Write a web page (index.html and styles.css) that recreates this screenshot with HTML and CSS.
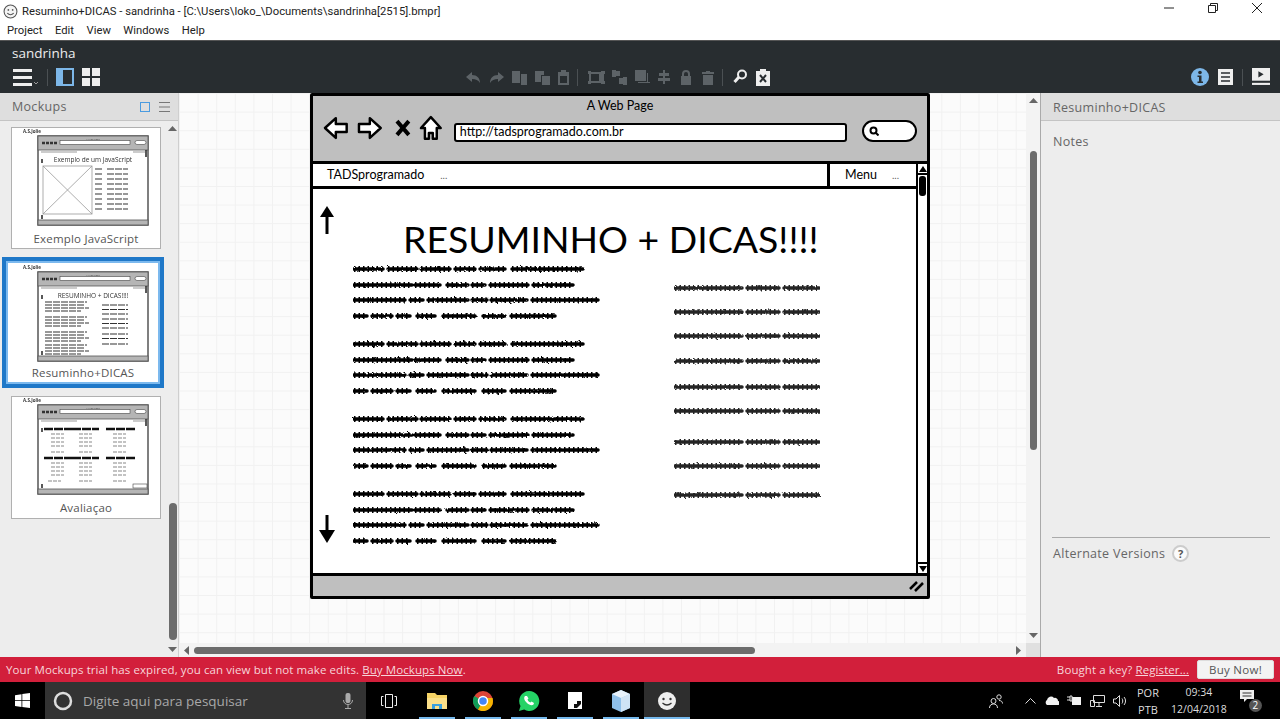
FILE: index.html
```html
<!DOCTYPE html>
<html lang="en">
<head>
  <meta charset="UTF-8">
  <meta name="viewport" content="width=device-width, initial-scale=1">
  <title>Resuminho+DICAS - sandrinha</title>
  <link rel="stylesheet" href="styles.css">
</head>
<body>

  <!-- shared drawings -->
  <svg class="defs" width="0" height="0">
    <defs>
      <filter id="rough" x="-2%" y="-2%" width="104%" height="104%">
        <feTurbulence type="fractalNoise" baseFrequency="0.3" numOctaves="1" seed="4"/>
        <feDisplacementMap in="SourceGraphic" scale="2.500"/>
      </filter>
      <path id="para" d="M1 3h29M35 3h29M68 3h29M102 3h20M127 3h25M159 3h71M1 19h58M62 19h25M94 19h21M119 19h13M137 19h38M180 19h40M1 34h51M57 34h13M75 34h40M119 34h15M138 34h36M179 34h30M211 34h34M1 50h13M19 50h20M44 50h13M64 50h18M90 50h32M130 50h22M158 50h44"/>
      <path id="row" d="M1 3h67M73 3h32M110 3h35"/>
      <g id="para-ink"><use href="#para" class="ink-base"/><use href="#para" class="ink-bump"/></g>
      <g id="row-ink"><use href="#row" class="ink-base"/><use href="#row" class="ink-bump"/></g>
      <g id="mini-frame">
        <text x="12" y="6" class="mini-tag">A.S.Jolie</text>
        <rect x="27" y="9" width="110" height="89" class="mini-page"/>
        <rect x="27" y="9" width="110" height="14" class="mini-grey"/>
        <path d="M31 16h3M35 16h3M39 16h3M43 16h3" class="mini-tools"/>
        <rect x="49" y="13.500" width="70" height="4" class="mini-field"/>
        <rect x="124" y="13.500" width="11" height="4" rx="2" class="mini-field"/>
        <text x="82" y="12.500" class="mini-cap">A Web Page</text>
        <path d="M30 25h36M122 25h12" class="mini-nav"/>
        <rect x="27" y="93" width="110" height="5" class="mini-grey"/>
        <path d="M135 23v7" class="mini-bar"/>
        <path d="M31 32v4M31 88v4" class="mini-bar"/>
      </g>
    </defs>
  </svg>

  <div class="titlebar">
    <svg class="app-smile" viewBox="0 0 14 14"><circle cx="7" cy="7" r="6" fill="#f4f4f4" stroke="#555"/><circle cx="5" cy="5.500" r=".8" fill="#555"/><circle cx="9" cy="5.500" r=".8" fill="#555"/><path d="M4 8.500q3 3 6 0" fill="none" stroke="#555"/></svg>
    <span class="title-text">Resuminho+DICAS - sandrinha - [C:\Users\loko_\Documents\sandrinha[2515].bmpr]</span>
    <div class="win-buttons">
      <svg viewBox="0 0 12 12"><path d="M1 6h10" stroke="#222" fill="none"/></svg>
      <svg viewBox="0 0 12 12"><path d="M1.500 3.500h7v7h-7zM3.500 3.500v-2h7v7h-2" stroke="#222" fill="none"/></svg>
      <svg viewBox="0 0 12 12"><path d="M1 1l10 10M11 1L1 11" stroke="#222" fill="none"/></svg>
    </div>
  </div>

  <nav class="menubar">
    <span>Project</span><span>Edit</span><span>View</span><span>Windows</span><span>Help</span>
  </nav>

  <header class="toolbar">
    <div class="project-name">sandrinha</div>
    <div class="tools">
      <div class="tools-left">
        <svg class="ic-menu" viewBox="0 0 26 17"><path d="M0 1.500h19M0 8.500h19M0 15.500h19" stroke="#eee" stroke-width="3" fill="none"/><path d="M21 13l2 2 2-2" stroke="#999" fill="none"/></svg>
        <i class="sep"></i>
        <svg class="ic-18" viewBox="0 0 18 18"><rect width="18" height="18" fill="#7db7e8"/><rect x="7" y="2" width="9" height="14" fill="#282d30"/></svg>
        <svg class="ic-18" viewBox="0 0 18 18"><path d="M0 0h8v8H0zM10 0h8v8h-8zM0 10h8v8H0zM10 10h8v8h-8z" fill="#eee"/></svg>
      </div>
      <div class="tools-mid">
        <svg class="ic-17" viewBox="0 0 17 17"><path d="M7 3L1 8l6 5v-3c4 0 6 1 8 4 0-5-3-8-8-8z"/></svg>
        <svg class="ic-17" viewBox="0 0 17 17"><path d="M10 3l6 5-6 5v-3c-4 0-6 1-8 4 0-5 3-8 8-8z"/></svg>
        <svg class="ic-17" viewBox="0 0 17 17"><path d="M1 2h8v12H1zM10 5h6v11h-6z"/></svg>
        <svg class="ic-17" viewBox="0 0 17 17"><path d="M1 2h9v4H7v7H1zM8 7h8v9H8z"/></svg>
        <svg class="ic-14" viewBox="0 0 14 17"><path d="M1 3h3V1h5v2h3v13H1zM3 7v7h7V7z"/></svg>
        <i class="sep dim"></i>
        <svg class="ic-17" viewBox="0 0 17 17"><path d="M0 2h3v1h10V2h4v3h-1v7h1v3h-4v-1H3v1H0v-3h1V5H0zM3 5v7h8V5z"/></svg>
        <svg class="ic-17" viewBox="0 0 17 17"><path d="M1 1h4v1h4v5H5v1H1zM8 9h4V8h4v8h-4v-1H8z"/></svg>
        <svg class="ic-17" viewBox="0 0 17 17"><path d="M1 1h11v11H1zM13 4h1v10H4v-1h9z"/><path d="M14 13l1 1 1-1" fill="none" stroke="#5d6367"/></svg>
        <svg class="ic-17" viewBox="0 0 17 17"><path d="M6 1h2v3h4v3H8v2h5v3H8v3H6v-3H1V9h5V7H2V4h4z"/></svg>
        <svg class="ic-12" viewBox="0 0 12 15"><path d="M1 6h1V4a4 4 0 018 0v2h1v9H1zM4 6h4V4a2 2 0 00-4 0z"/></svg>
        <svg class="ic-12 ic-trash" viewBox="0 0 12 15"><path d="M0 2h4V1h4v1h4v2H0zM1 5h10v10H1z"/></svg>
        <i class="sep dim"></i>
        <svg class="ic-17 lit" viewBox="0 0 17 17"><circle cx="9" cy="5.500" r="4" fill="none" stroke="#eee" stroke-width="2"/><path d="M6 8l-4.500 5" stroke="#eee" stroke-width="3"/></svg>
        <svg class="ic-14 lit" viewBox="0 0 14 17"><path d="M0 2h4V0h6v2h4v15H0z" fill="#eee"/><path d="M4 6l6 7M10 6l-6 7" stroke="#282d30" stroke-width="2"/></svg>
      </div>
      <div class="tools-right">
        <svg class="ic-18" viewBox="0 0 18 18"><circle cx="9" cy="9" r="9" fill="#7db7e8"/><circle cx="9" cy="4.500" r="1.800" fill="#282d30"/><path d="M6.500 7.500h4v6h1.500v1.500H6.500v-1.500H8V9H6.500z" fill="#282d30"/></svg>
        <svg class="ic-list" viewBox="0 0 15 16"><rect width="15" height="16" fill="#eee"/><path d="M3 4h9M3 8h9M3 12h9" stroke="#282d30" stroke-width="1.500"/></svg>
        <i class="sep dim"></i>
        <svg class="ic-18" viewBox="0 0 17 17"><path d="M0 0h17v12H0z" fill="#eee"/><path d="M6 3l5 3-5 3z" fill="#282d30"/><path d="M0 15h17" stroke="#eee" stroke-width="2"/></svg>
      </div>
    </div>
  </header>

  <main class="workspace">
    <aside class="mockups">
      <div class="panel-head">
        <span>Mockups</span>
        <div class="head-icons">
          <i class="square"></i>
          <svg width="11" height="10" viewBox="0 0 11 10"><path d="M0 .5h11M0 5h11M0 9.500h11" stroke="#777" fill="none"/></svg>
        </div>
      </div>
      <div class="thumbs">
        <div class="thumb-list">
          <div class="thumb">
            <svg class="thumb-art" viewBox="0 0 150 100">
              <use href="#mini-frame"/>
              <text x="82" y="34.500" class="mini-title">Exemplo de um JavaScript</text>
              <rect x="32" y="39" width="49" height="48" class="mini-ph"/>
              <path d="M32 39l49 48M81 39L32 87" class="mini-ph"/>
              <path d="M84 42h8M96 42h21M84 47h8M96 47h21M84 52h8M96 52h21M84 57h8M96 57h21M84 62h8M96 62h21M84 67h8M96 67h21M84 72h8M96 72h21M84 77h8M96 77h21M84 82h8M96 82h21" class="mini-lines"/>
            </svg>
            <span class="thumb-name">Exemplo JavaScript</span>
          </div>
          <div class="thumb selected">
            <svg class="thumb-art" viewBox="0 0 150 100">
              <use href="#mini-frame"/>
              <text x="82" y="35" class="mini-title">RESUMINHO + DICAS!!!!</text>
              <path d="M34 39h42M34 42h39M34 45h44M34 48h36M34 54h42M34 57h39M34 60h44M34 63h36M34 69h42M34 72h39M34 75h44M34 78h36M34 82h42M34 85h39M34 88h44M34 91h36" class="mini-lines"/>
              <path d="M91 42h26M91 46.500h26M91 51h26M91 56h26M91 60.500h26M91 65h26M91 71h26M91 75.500h26M91 81h26" class="mini-lines"/>
            </svg>
            <span class="thumb-name">Resuminho+DICAS</span>
          </div>
          <div class="thumb">
            <svg class="thumb-art" viewBox="0 0 150 100">
              <use href="#mini-frame"/>
              <path d="M33 33h29M61 33h27M95 33h30M33 62h29M61 62h27M95 62h30" class="mini-heads"/>
              <path d="M40 38h13M68 38h13M102 38h13M40 42h13M68 42h13M102 42h13M40 46h13M68 46h13M102 46h13M40 50h13M68 50h13M102 50h13M40 56h13M68 56h13M102 56h13M40 67h13M68 67h13M102 67h13M40 71h13M68 71h13M102 71h13M40 75h13M68 75h13M102 75h13M40 79h13M68 79h13M102 79h13M37 85h13M68 85h13M102 85h13" class="mini-soft"/>
              <rect x="122" y="88" width="14" height="4" class="mini-field"/>
            </svg>
            <span class="thumb-name">Avaliaçao</span>
          </div>
        </div>
        <div class="side-scroll">
          <svg class="tri" width="9" height="5" viewBox="0 0 9 5"><path d="M0 5l4.500-5 4.500 5z"/></svg>
          <i class="side-thumb"></i>
          <svg class="tri" width="9" height="5" viewBox="0 0 9 5"><path d="M0 0l4.500 5 4.500-5z"/></svg>
        </div>
      </div>
    </aside>

    <section class="canvas-wrap">
      <div class="canvas-row">
        <div class="canvas">
          <div class="browser">
            <div class="browser-head">
              <div class="page-name">A Web Page</div>
              <div class="address-row">
                <svg width="26" height="24" viewBox="0 0 26 24"><path d="M13 2L2 12l11 10v-6h11V8H13z" class="nav-ic"/></svg>
                <svg width="26" height="24" viewBox="0 0 26 24"><path d="M13 2l11 10-11 10v-6H2V8h11z" class="nav-ic"/></svg>
                <svg class="nav-stop" width="16" height="18" viewBox="0 0 16 18"><path d="M2 2l12 14M14 2L2 16" stroke="#000" stroke-width="4" fill="none"/></svg>
                <svg width="24" height="26" viewBox="0 0 24 26"><path d="M12 2L2 13h4v11h4v-6h4v6h4V13h4z" class="nav-ic"/></svg>
                <div class="address">http://tadsprogramado.com.br</div>
                <div class="search-pill">
                  <svg width="10" height="10" viewBox="0 0 10 10"><circle cx="4.500" cy="4.500" r="3" fill="none" stroke="#000" stroke-width="2"/><path d="M7 7l2.500 2.500" stroke="#000" stroke-width="2"/></svg>
                </div>
              </div>
            </div>
            <div class="browser-main">
              <div class="browser-content">
                <div class="site-nav">
                  <div class="site-brand"><span>TADSprogramado</span><span class="dots">...</span></div>
                  <div class="site-menu"><span>Menu</span><span class="dots">...</span></div>
                </div>
                <div class="page">
                  <svg class="arrow arrow-up" width="14" height="28" viewBox="0 0 14 28"><path d="M7 28V8" stroke="#000" stroke-width="3"/><path d="M7 0l7 11H0z"/></svg>
                  <svg class="arrow arrow-down" width="16" height="28" viewBox="0 0 16 28"><path d="M8 0v20" stroke="#000" stroke-width="3"/><path d="M8 28L0 15h16z"/></svg>
                  <h1>RESUMINHO + DICAS!!!!</h1>
                  <div class="page-cols">
                    <svg class="text-left" width="250" height="290" viewBox="0 0 250 290">
                      <use href="#para-ink"/>
                      <use href="#para-ink" y="75"/>
                      <use href="#para-ink" y="150"/>
                      <use href="#para-ink" y="225"/>
                    </svg>
                    <svg class="text-right" width="146" height="240" viewBox="0 0 146 240">
                      <use href="#row-ink"/>
                      <use href="#row-ink" y="24"/>
                      <use href="#row-ink" y="48"/>
                      <use href="#row-ink" y="73"/>
                      <use href="#row-ink" y="99"/>
                      <use href="#row-ink" y="123"/>
                      <use href="#row-ink" y="154"/>
                      <use href="#row-ink" y="178"/>
                      <use href="#row-ink" y="207"/>
                    </svg>
                  </div>
                </div>
              </div>
              <div class="page-scroll">
                <span class="scroll-btn"><svg width="8" height="6" viewBox="0 0 8 6"><path d="M0 6l4-6 4 6z"/></svg></span>
                <i class="scroll-handle"></i>
                <span class="scroll-btn"><svg width="8" height="6" viewBox="0 0 8 6"><path d="M0 0l4 6 4-6z"/></svg></span>
              </div>
            </div>
            <div class="browser-foot">
              <svg width="15" height="12" viewBox="0 0 15 12"><path d="M1 9l7-7M6 11l8-8" stroke="#000" stroke-width="2.500"/></svg>
            </div>
          </div>
        </div>
        <div class="v-scroll">
          <svg class="tri" width="9" height="5" viewBox="0 0 9 5"><path d="M0 5l4.500-5 4.500 5z"/></svg>
          <i class="v-thumb"></i>
          <svg class="tri" width="9" height="5" viewBox="0 0 9 5"><path d="M0 0l4.500 5 4.500-5z"/></svg>
        </div>
      </div>
      <div class="h-scroll-row">
        <div class="h-scroll">
          <svg class="tri" width="5" height="9" viewBox="0 0 5 9"><path d="M5 0L0 4.500 5 9z"/></svg>
          <i class="h-thumb"></i>
          <svg class="tri" width="5" height="9" viewBox="0 0 5 9"><path d="M0 0l5 4.500L0 9z"/></svg>
        </div>
        <div class="scroll-corner"></div>
      </div>
    </section>

    <aside class="inspector">
      <div class="panel-head">Resuminho+DICAS</div>
      <div class="notes">Notes</div>
      <div class="versions">
        <span>Alternate Versions</span>
        <span class="help">?</span>
      </div>
    </aside>
  </main>

  <div class="trial">
    <div>Your Mockups trial has expired, you can view but not make edits. <a>Buy Mockups Now</a>.</div>
    <div class="trial-right">
      <span>Bought a key? <a>Register...</a></span>
      <button>Buy Now!</button>
    </div>
  </div>

  <footer class="taskbar">
    <div class="start">
      <svg width="15" height="15" viewBox="0 0 15 15"><path d="M0 2.200l6.500-1v6H0zM7.300 1l7.700-1v7.200H7.300zM0 8h6.500v6L0 13zM7.300 8H15v7l-7.700-1z" fill="#fff"/></svg>
    </div>
    <div class="search">
      <svg width="20" height="20" viewBox="0 0 20 20"><circle cx="10" cy="10" r="8" fill="none" stroke="#ddd" stroke-width="2.500"/></svg>
      <span>Digite aqui para pesquisar</span>
      <svg class="mic" width="10" height="16" viewBox="0 0 10 16"><rect x="2.500" y="0" width="5" height="10" rx="2" fill="#aaa"/><path d="M.5 7c0 6 9 6 9 0M5 12v3M2 15.500h6" stroke="#aaa" fill="none"/></svg>
    </div>
    <div class="task-icons">
      <span class="task"><svg width="16" height="16" viewBox="0 0 16 16"><path d="M4.500 1.500h7v13h-7zM2.500 3.500H.5v9h2M13.500 3.500h2v9h-2" fill="none" stroke="#eee"/></svg></span>
      <span class="task open"><svg width="20" height="20" viewBox="0 0 20 20"><path d="M0 2h8l2 2h10v14H0z" fill="#f6d365"/><path d="M0 7h20v11H0z" fill="#fbe08a"/><path d="M5 18v-5h10v5h-3v-3H8v3z" fill="#3aa0dd"/></svg></span>
      <span class="task open"><svg width="20" height="20" viewBox="0 0 20 20"><circle cx="10" cy="10" r="10" fill="#db4437"/><path d="M10 10L1.300 5A10 10 0 005 18.700z" fill="#0f9d58"/><path d="M10 10l-5 8.700A10 10 0 0020 10l-.4-3H10z" fill="#f4b400"/><circle cx="10" cy="10" r="4.500" fill="#4285f4" stroke="#fff" stroke-width="1.500"/></svg></span>
      <span class="task open"><svg width="22" height="22" viewBox="0 0 22 22"><path d="M11 1a10 10 0 00-8.500 15L1 21l5.200-1.400A10 10 0 1011 1z" fill="#25d366"/><path d="M7 6c-1.500 1.500-1 4 1.500 6.500S14 16 15.500 14.500l.5-1.500-2.500-1.500-1 1c-1.500-.5-2.500-1.500-3-3l1-1L9 6z" fill="#fff"/></svg></span>
      <span class="task open"><svg width="14" height="17" viewBox="0 0 14 17"><path d="M0 0h14v17H0z" fill="#fff"/><path d="M13 9v3l-4 4H6v-4h3V9z" fill="#111"/></svg></span>
      <span class="task open"><svg width="18" height="22" viewBox="0 0 18 22"><path d="M9 0l9 4v14l-9 4-9-4V4z" fill="#8fc0ea"/><path d="M9 8l9-4v14l-9 4z" fill="#cfe3f5"/><path d="M9 0l9 4-9 4-9-4z" fill="#e8f2fb"/></svg></span>
      <span class="task active"><svg width="20" height="20" viewBox="0 0 20 20"><circle cx="10" cy="10" r="9" fill="#eee"/><circle cx="6.500" cy="8" r="1.200" fill="#333"/><circle cx="13.500" cy="8" r="1.200" fill="#333"/><path d="M5.500 12q4.500 4 9 0" fill="none" stroke="#333" stroke-width="1.200"/></svg></span>
    </div>
    <div class="tray">
      <svg class="tray-person" width="14" height="14" viewBox="0 0 14 14"><circle cx="4.500" cy="7" r="2.500" fill="none" stroke="#ddd"/><circle cx="10" cy="3" r="2.200" fill="none" stroke="#ddd"/><path d="M.5 14c0-3 2-4 4-4s4 1 4 4M10 6.500c2 0 3.500 1 3.500 3" fill="none" stroke="#ddd"/></svg>
      <svg class="tray-up" width="11" height="6" viewBox="0 0 11 6"><path d="M.5 5.500l5-5 5 5" fill="none" stroke="#ddd"/></svg>
      <svg width="15" height="9" viewBox="0 0 15 9"><path d="M3 9a3 3 0 010-5 4 4 0 017-2 3 3 0 014 3 2 2 0 010 4z" fill="#f2f2f2"/></svg>
      <svg width="15" height="11" viewBox="0 0 15 11"><path d="M5 2h9v8H5z" fill="#f2f2f2"/><path d="M0 2h3M0 5h3M3 1v5h2V1z" stroke="#ddd" fill="none"/></svg>
      <svg width="15" height="12" viewBox="0 0 15 12"><path d="M3.500.5h11v7h-11zM9 8v3M6 11.500h6M.5 5.500h4v6h-4z" fill="none" stroke="#ddd"/></svg>
      <svg width="14" height="12" viewBox="0 0 14 12"><path d="M.5 4h2.500L6.500.5v11L3 8H.5zM9 3.500c1 1.500 1 3.500 0 5M11 2c2 2.500 2 5.500 0 8" fill="none" stroke="#ddd"/></svg>
      <div class="lang"><span>POR</span><span>PTB</span></div>
      <div class="clock"><span>09:34</span><span>12/04/2018</span></div>
      <div class="notif">
        <svg width="14" height="13" viewBox="0 0 14 13"><path d="M0 0h14v9H7l-3 3V9H0z" fill="#eee"/><path d="M2.500 3h9M2.500 6h9" stroke="#333"/></svg>
        <span class="badge">2</span>
      </div>
    </div>
  </footer>

</body>
</html>
```

FILE: styles.css
```css
* {
  box-sizing: border-box;
}

html, body {
  height: 100%;
}

body {
  margin: 0;
  width: 1280px;
  height: 719px;
  overflow: hidden;
  display: flex;
  flex-direction: column;
  font-family: "Open Sans", sans-serif;
  background: #fff;
}

.defs {
  position: absolute;
}

i {
  display: block;
}

/* window chrome */
.titlebar {
  height: 22px;
  display: flex;
  align-items: center;
  padding-left: 3px;
  font-family: Roboto, sans-serif;
  font-size: 11.250px;
  color: #222;
}

.app-smile {
  width: 15px;
  height: 15px;
  margin-right: 4px;
}

.title-text {
  flex: 1;
}

.win-buttons {
  display: flex;
  gap: 32px;
  padding-right: 17px;
  margin-top: -6px;
}

.win-buttons svg {
  width: 12px;
  height: 12px;
}

.menubar {
  height: 18px;
  display: flex;
  gap: 12.500px;
  padding-left: 7px;
  font-family: Roboto, sans-serif;
  font-size: 11.250px;
  line-height: 17px;
  color: #222;
}

/* app toolbar */
.toolbar {
  height: 53px;
  background: #282d30;
  border-top: 1px solid #555;
  color: #eee;
}

.project-name {
  padding: 3px 0 0 12px;
  font-size: 13.500px;
  line-height: 18px;
}

.tools {
  display: flex;
  align-items: center;
  height: 20px;
  margin-top: 5px;
  position: relative;
}

.tools svg {
  display: block;
}

.tools-left {
  display: flex;
  align-items: center;
  padding-left: 13px;
  gap: 8px;
}

.ic-menu {
  width: 26px;
  height: 17px;
}

.ic-18 {
  width: 18px;
  height: 18px;
}

.ic-17 {
  width: 17px;
  height: 17px;
}

.ic-14 {
  width: 14px;
  height: 17px;
}

.ic-12 {
  width: 12px;
  height: 15px;
}

.ic-list {
  width: 15px;
  height: 16px;
}

.sep {
  width: 1px;
  height: 17px;
  background: #4b5053;
}

.tools-mid {
  display: flex;
  align-items: center;
  gap: 6px;
  margin-left: 365px;
  fill: #5d6367;
}

.tools-mid .sep {
  margin-right: 4px;
}

.tools-mid .ic-trash {
  margin: 0 2px 0 4px;
}

.tools-right {
  display: flex;
  align-items: center;
  gap: 9px;
  margin-left: auto;
  padding-right: 10px;
}

/* main area */
.workspace {
  height: 564px;
  display: flex;
  font-size: 12.500px;
  color: #666;
}

.panel-head {
  height: 28px;
  background: #dedede;
  border-bottom: 1px solid #c4c4c4;
  display: flex;
  align-items: center;
  justify-content: space-between;
  padding: 0 8px 0 12px;
  letter-spacing: .3px;
}

.inspector .panel-head {
  padding-top: 2px;
}

.mockups {
  width: 179px;
  background: #ededed;
  border-right: 1px solid #cfcfcf;
  display: flex;
  flex-direction: column;
}

.head-icons {
  display: flex;
  align-items: center;
  gap: 9px;
}

.square {
  width: 10px;
  height: 10px;
  border: 1px solid #4a9be0;
}

.thumbs {
  flex: 1;
  display: flex;
}

.thumb-list {
  width: 167px;
  padding: 6px 0 0 2px;
  display: flex;
  flex-direction: column;
  gap: 8px;
}

.thumb {
  width: 150px;
  height: 122px;
  margin-left: 9px;
  background: #fff;
  border: 1px solid #b0b0b0;
  display: flex;
  flex-direction: column;
  align-items: center;
}

.thumb:last-child {
  height: 123px;
}

.thumb.selected {
  width: 162px;
  height: 131px;
  margin-left: 0;
  border: 4px solid #1f78c8;
  outline: 2px solid #7cb9ee;
  outline-offset: -6px;
}

.thumb-art {
  width: 150px;
  height: 100px;
  flex-shrink: 0;
  margin: -1px -1px 0;
  filter: blur(.35px);
}

.selected .thumb-art {
  align-self: flex-start;
  margin: 2px 0 0 5px;
}

.thumb-name {
  font-size: 11.500px;
  line-height: 24px;
  letter-spacing: .2px;
  color: #555;
}

.selected .thumb-name {
  line-height: 20px;
}

.mini-tag {
  font-size: 4.500px;
  fill: #333;
  font-weight: 700;
}

.mini-cap {
  font-size: 2.500px;
  text-anchor: middle;
  fill: #444;
}

.mini-title {
  font-size: 6.500px;
  text-anchor: middle;
  fill: #333;
}

.mini-page {
  fill: #fff;
  stroke: #555;
  stroke-width: 1.500;
}

.mini-grey {
  fill: #b5b5b5;
  stroke: #555;
  stroke-width: .8;
}

.mini-field {
  fill: #fff;
  stroke: #444;
  stroke-width: .6;
}

.mini-tools {
  stroke: #333;
  stroke-width: 2.500;
  fill: none;
}

.mini-nav {
  stroke: #999;
  stroke-width: 1;
  fill: none;
}

.mini-bar {
  stroke: #222;
  stroke-width: 1.500;
  fill: none;
}

.mini-ph {
  fill: #fff;
  stroke: #999;
  stroke-width: .8;
}

.mini-lines {
  stroke: #333;
  stroke-width: 1.100;
  stroke-dasharray: 7 1;
  fill: none;
}

.mini-heads {
  stroke: #111;
  stroke-width: 2.400;
  stroke-dasharray: 9 1;
  fill: none;
}

.mini-soft {
  stroke: #888;
  stroke-width: 1.200;
  stroke-dasharray: 4 1;
  fill: none;
}

.side-scroll, .v-scroll {
  display: flex;
  flex-direction: column;
  align-items: center;
  padding: 5px 0;
  fill: #666;
}

.side-scroll {
  width: 11px;
  justify-content: space-between;
  position: relative;
}

.side-thumb {
  width: 8px;
  height: 137px;
  margin-top: auto;
  margin-bottom: 7px;
  background: #6c6c6c;
  border-radius: 4px;
}

.canvas-wrap {
  width: 861px;
  display: flex;
  flex-direction: column;
}

.canvas-row {
  flex: 1;
  display: flex;
  min-height: 0;
}

.canvas {
  flex: 1;
  position: relative;
  background-color: #fbfbfb;
  background-image: linear-gradient(#f1f1f1 1px, transparent 1px), linear-gradient(90deg, #f1f1f1 1px, transparent 1px);
  background-size: 18.600px 18.600px;
}

.v-scroll {
  width: 14px;
  background: #f3f3f3;
  padding: 5px 0;
}

.v-thumb {
  width: 7px;
  height: 299px;
  margin: 48px 0 auto;
  background: #6c6c6c;
  border-radius: 4px;
}

.h-scroll-row {
  height: 14px;
  display: flex;
}

.h-scroll {
  flex: 1;
  display: flex;
  align-items: center;
  padding: 0 5px;
  background: #f3f3f3;
  fill: #666;
}

.h-thumb {
  width: 561px;
  height: 7px;
  margin: 0 auto 0 5px;
  background: #6c6c6c;
  border-radius: 4px;
}

.scroll-corner {
  width: 14px;
  background: #e0e0e0;
}

.inspector {
  width: 240px;
  background: #ededed;
  border-left: 1px solid #aaa;
  display: flex;
  flex-direction: column;
}

.notes {
  padding: 12px 12px 0;
  height: 416px;
  letter-spacing: .3px;
}

.versions {
  margin: 0 10px 0 11px;
  padding: 7px 0 0 1px;
  border-top: 1px solid #aaa;
  display: flex;
  align-items: center;
  gap: 7px;
  letter-spacing: .3px;
}

.help {
  width: 17px;
  height: 17px;
  border: 2px solid #ccc;
  border-radius: 50%;
  background: #fbfbfb;
  display: flex;
  align-items: center;
  justify-content: center;
  font-size: 11px;
  font-weight: 700;
  color: #555;
}

/* the wireframe on the canvas */
.browser {
  position: absolute;
  left: 131px;
  top: 0;
  width: 620px;
  height: 506px;
  background: #fff;
  border: 3px solid #000;
  border-radius: 2px;
  display: flex;
  flex-direction: column;
  font-family: "Lato", sans-serif;
  color: #000;
}

.browser-head {
  height: 68px;
  background: #bfbfbf;
  border-bottom: 3px solid #000;
  flex-shrink: 0;
}

.page-name {
  text-align: center;
  font-size: 12.500px;
  line-height: 15px;
  padding: 2px 0 0 0;
}

.address-row {
  display: flex;
  align-items: center;
  padding: 1px 10px 0;
  gap: 8px;
}

.nav-ic {
  fill: #fff;
  stroke: #000;
  stroke-width: 2.500;
  stroke-linejoin: round;
}

.nav-stop {
  margin-left: 5px;
}

.address {
  width: 398px;
  height: 19px;
  margin: 9px 0 0 3px;
  padding-left: 4px;
  background: #fff;
  border: 2px solid #000;
  border-radius: 3px;
  font-size: 12.500px;
  line-height: 14px;
}

.search-pill {
  width: 56px;
  height: 22px;
  margin: 6px 0 0 7px;
  padding: 4px 0 0 5px;
  background: #fff;
  border: 2px solid #000;
  border-radius: 11px;
}

.search-pill svg {
  display: block;
}

.browser-main {
  flex: 1;
  display: flex;
  min-height: 0;
}

.browser-content {
  flex: 1;
  display: flex;
  flex-direction: column;
}

.site-nav {
  height: 25px;
  display: flex;
  font-size: 12.500px;
  border-bottom: 3px solid #000;
}

.site-brand {
  flex: 1;
  display: flex;
  gap: 16px;
  padding: 3px 0 0 14px;
  border-right: 3px solid #000;
}

.site-menu {
  width: 86px;
  display: flex;
  justify-content: space-between;
  padding: 3px 17px 0 15px;
}

.dots {
  color: #666;
  font-size: 10px;
  padding-top: 2px;
}

.page {
  flex: 1;
  position: relative;
}

.arrow {
  position: absolute;
  left: 7px;
}

.arrow-up {
  top: 17px;
}

.arrow-down {
  left: 6px;
  top: 326px;
}

h1 {
  margin: 0;
  padding-top: 28px;
  padding-left: 90px;
  font-size: 37.400px;
  line-height: 44px;
  font-weight: 400;
  white-space: nowrap;
}

.page-cols {
  display: flex;
  margin-top: 5px;
  padding-left: 40px;
}

.text-left, .text-right {
  filter: url(#rough);
}

.ink-base {
  stroke: #000;
  stroke-width: 3.500;
  fill: none;
  stroke-linecap: round;
}

.ink-bump {
  stroke: #000;
  stroke-width: 6;
  stroke-dasharray: 1.500 3;
  fill: none;
}

.text-right {
  margin: 19px 0 0 71px;
  opacity: .85;
}

.page-scroll {
  width: 11px;
  flex-shrink: 0;
  border-left: 2px solid #000;
  display: flex;
  flex-direction: column;
  align-items: center;
}

.scroll-btn {
  width: 100%;
  height: 11px;
  border-bottom: 2px solid #000;
  display: flex;
  justify-content: center;
  align-items: center;
}

.scroll-btn:last-child {
  border-bottom: 0;
  border-top: 2px solid #000;
}

.scroll-handle {
  width: 7px;
  height: 20px;
  margin: 1px 0 auto;
  background: #000;
  border-radius: 3px;
}

.browser-foot {
  height: 23px;
  flex-shrink: 0;
  background: #bfbfbf;
  border-top: 3px solid #000;
  display: flex;
  justify-content: flex-end;
  align-items: center;
  padding: 0 3px 0 0;
}

/* trial strip */
.trial {
  height: 25px;
  background: #d21f3b;
  color: #f7d5da;
  font-size: 11.500px;
  letter-spacing: .09px;
  display: flex;
  align-items: center;
  justify-content: space-between;
  padding: 0 6px;
}

.trial a {
  text-decoration: underline;
}

.trial-right {
  display: flex;
  align-items: center;
  gap: 8px;
}

.trial button {
  width: 77px;
  height: 19px;
  padding: 0;
  border: 1px solid #ddd;
  border-radius: 2px;
  background: #f3f3f3;
  color: #555;
  font: 11.500px "Open Sans", sans-serif;
  letter-spacing: .3px;
}

/* windows taskbar */
.taskbar {
  height: 37px;
  flex-shrink: 0;
  background: #000;
  display: flex;
  color: #ddd;
  font-size: 11px;
}

.start {
  width: 45px;
  display: flex;
  align-items: center;
  justify-content: center;
}

.search {
  width: 321px;
  background: #333;
  display: flex;
  align-items: center;
  padding: 0 13px 0 8px;
  font-size: 13.500px;
  color: #a8a8a8;
}

.search span {
  margin-left: 10px;
  flex: 1;
}

.task-icons {
  display: flex;
}

.task {
  width: 46px;
  display: flex;
  align-items: center;
  justify-content: center;
}

.task.open {
  background: linear-gradient(#76b9ed, #76b9ed) bottom center / 36px 2px no-repeat;
}

.task.open:nth-child(2) {
  margin-left: 2px;
}

.task.active {
  background: #2e2e2e linear-gradient(#76b9ed, #76b9ed) bottom / 100% 2px no-repeat;
}

.tray {
  flex: 1;
  display: flex;
  align-items: center;
  padding-left: 299px;
  gap: 8px;
}

.tray-up {
  margin-left: 14px;
}

.lang, .clock {
  display: flex;
  flex-direction: column;
  align-items: center;
  line-height: 17px;
}

.lang {
  margin-left: 2px;
}

.clock {
  width: 56px;
  margin-left: 4px;
  font-size: 10.500px;
}

.notif {
  position: relative;
  margin-left: 5px;
  width: 22px;
  height: 22px;
}

.notif svg {
  display: block;
}

.badge {
  position: absolute;
  right: 0;
  bottom: 0;
  width: 13px;
  height: 13px;
  border-radius: 50%;
  background: #555;
  color: #fff;
  font-size: 10px;
  line-height: 13px;
  text-align: center;
}
```
